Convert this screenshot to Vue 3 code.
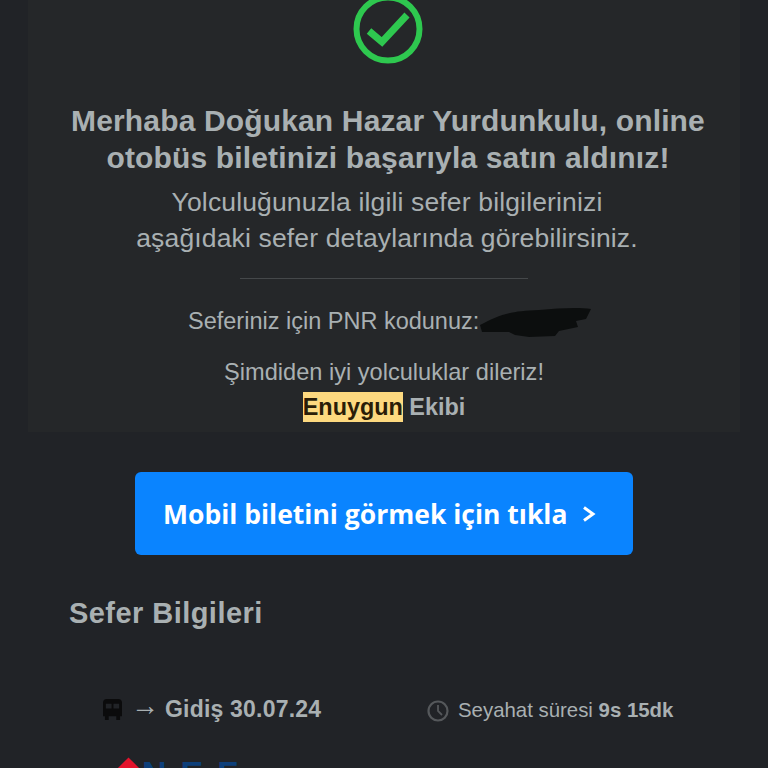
<template>
  <div class="page">
    <section class="intro">
      <svg class="check" viewBox="0 0 70 70" aria-hidden="true">
        <circle cx="35" cy="35" r="31.5" fill="none" stroke="#2ec84f" stroke-width="6" />
        <path d="M16 37 L29 48 L54 21" fill="none" stroke="#2ec84f" stroke-width="7" />
      </svg>
      <h1>Merhaba Doğukan Hazar Yurdunkulu, online<br>otobüs biletinizi başarıyla satın aldınız!</h1>
      <p class="lead">Yolculuğunuzla ilgili sefer bilgilerinizi<br>aşağıdaki sefer detaylarında görebilirsiniz.</p>
      <hr>
      <p class="pnr">
        Seferiniz için PNR kodunuz:
        <svg class="scribble" viewBox="0 0 112 32" aria-hidden="true">
          <path d="M1 19 C20 9 30 5 60 4 C80 2 100 1 112 3 L107 13 L97 15 L99 21 L80 25 L76 30 L50 31 L36 29 L30 26 L3 26 Z" fill="#0c0e0e" />
        </svg>
      </p>
      <p class="wish">Şimdiden iyi yolculuklar dileriz!</p>
      <p class="team"><mark>Enuygun</mark> Ekibi</p>
    </section>

    <a class="cta" href="#">Mobil biletini görmek için tıkla
      <svg viewBox="0 0 14 18" aria-hidden="true"><path d="M2 2.5 L11 9 L2 15.5" fill="none" stroke="#fff" stroke-width="3" /></svg>
    </a>

    <h2>Sefer Bilgileri</h2>

    <div class="trip">
      <div class="leg">
        <svg class="bus" viewBox="0 0 20 22" aria-hidden="true">
          <path d="M4 0 H16 Q20 0 20 4 V18 H18 V22 H14 V18 H6 V22 H2 V18 H0 V4 Q0 0 4 0 Z M3 5 V10 H9 V5 Z M11 5 V10 H17 V5 Z" fill="#0b0b0c" fill-rule="evenodd" />
        </svg>
        <span class="arrow">→</span>
        <strong>Gidiş 30.07.24</strong>
      </div>
      <div class="duration">
        <svg class="clock" viewBox="0 0 22 22" aria-hidden="true">
          <circle cx="11" cy="11" r="9.5" fill="none" stroke="#55585b" stroke-width="2.2" />
          <path d="M11 5 V11 L15 15" fill="none" stroke="#55585b" stroke-width="1.8" />
        </svg>
        <span>Seyahat süresi <b>9s 15dk</b></span>
      </div>
    </div>

    <div class="brand">
      <span class="mark"></span>
      <span class="name">NEF</span>
    </div>
  </div>
</template>

<script setup>
</script>

<style>
html, body { margin: 0; background: #212327; }
</style>

<style scoped>
.page {
  height: 768px;
  overflow: hidden;
  background: #212327;
  color: #a9b0b2;
  font-family: "Liberation Sans", Arial, sans-serif;
}
.intro {
  margin: 0 28px;
  height: 432px;
  box-sizing: border-box;
  padding-top: 1px;
  background: #252729;
  text-align: center;
}
.check { display: block; width: 70px; height: 70px; margin: -7px 0 0 325px; }
h1 {
  margin: 38px 0 0;
  padding-left: 8px;
  font-size: 30px;
  line-height: 37px;
  font-weight: 700;
  letter-spacing: 0.15px;
  color: #a9b0b2;
}
.lead {
  margin: 8px 0 0;
  padding-left: 6px;
  font-size: 26.5px;
  line-height: 36px;
  letter-spacing: 0.15px;
}
hr {
  width: 288px;
  height: 1px;
  margin: 22px auto 0;
  border: 0;
  background: #45484a;
}
.pnr {
  position: relative;
  width: fit-content;
  margin: 27px 0 0 160px;
  font-size: 23.5px;
  line-height: 30px;
}
.scribble { position: absolute; left: 100%; top: 0; width: 112px; height: 32px; }
.wish { margin: 21px 0 0; font-size: 23.6px; line-height: 30px; }
.team { margin: 5px 0 0; font-size: 23.4px; line-height: 30px; font-weight: 700; }
mark { padding: 2px 0; background: #fdd97f; color: #2a1d08; }
.cta {
  display: flex;
  align-items: center;
  gap: 15px;
  width: 498px;
  height: 83px;
  box-sizing: border-box;
  margin: 40px 0 0 135px;
  padding-left: 28px;
  border-radius: 6px;
  background: #0a84ff;
  color: #fff;
  text-decoration: none;
  font-family: "Open Sans", sans-serif;
  font-size: 26.5px;
  font-weight: 700;
}
.cta svg { width: 14px; height: 18px; }
h2 {
  margin: 42px 0 0 69px;
  font-size: 29px;
  line-height: 32px;
  letter-spacing: 0.45px;
  color: #a9b0b2;
}
.trip {
  display: flex;
  align-items: center;
  margin: 65px 0 0 103px;
  height: 30px;
}
.leg { display: flex; align-items: center; width: 324px; font-size: 23px; }
.bus { width: 19px; height: 21px; margin-right: 9px; }
.arrow { margin: 0 6px 7px 0; font-size: 28px; line-height: 30px; }
.leg strong { letter-spacing: 0.2px; }
.duration { display: flex; align-items: center; gap: 9px; margin-top: 3px; font-size: 20.4px; }
.clock { width: 22px; height: 22px; }
.brand {
  display: flex;
  align-items: flex-start;
  gap: 3px;
  margin: 31px 0 0 115px;
}
.mark {
  flex: none;
  width: 27px;
  height: 27px;
  margin-top: 8px;
  background: #e3132c;
  transform: rotate(45deg);
}
.name {
  margin: -3px 0 0 -3px;
  color: #0d3f7a;
  font-size: 34px;
  line-height: 42px;
  font-weight: 700;
  letter-spacing: 14px;
}
</style>
